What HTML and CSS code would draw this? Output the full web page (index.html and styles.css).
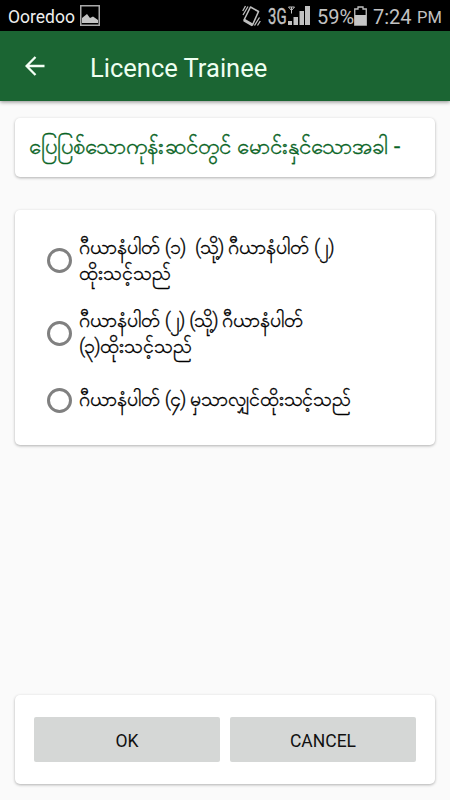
FILE: index.html
```
<!DOCTYPE html>
<html lang="my">
<head>
<meta charset="utf-8">
<title>Licence Trainee</title>
<link rel="stylesheet" href="styles.css">
</head>
<body>
<div class="status">
  <span class="carrier">Ooredoo</span>
  <svg class="picture" width="20" height="21" viewBox="0 0 20 21"><rect x=".75" y=".75" width="18.5" height="19.5" fill="none" stroke="#aaa" stroke-width="1.5"/><path d="M2 18V13L7 9L10 13L13 11.500L18 15V18Z" fill="#c4c4c4"/></svg>
  <svg class="vibrate" width="19" height="22" viewBox="0 0 19 22" fill="none" stroke="#bebebe"><path d="M8.500 2L16.500 6.500L10.500 20L2 15Z" stroke-width="1.600" stroke-linejoin="round"/><path d="M2 15L10.500 20" stroke-width="3"/><path d="M.7 6L3.500 1M1 10L6 1.500M12.500 20.500L17.500 12.500M15.500 20.500L18.300 16" stroke-width="1.300"/></svg>
  <span class="network">3G</span>
  <svg class="signal" width="22" height="20" viewBox="0 0 22 20"><path d="M0 15H4V19H0ZM5.500 11H10V19H5.500ZM11.500 5H16V19H11.500ZM17 0H22V19H17Z" fill="#c2c2c2"/><path d="M.5 1H6.500L3.500 4.500ZM3.500 1V7.500" fill="none" stroke="#c2c2c2"/></svg>
  <span class="percent">59%</span>
  <svg class="battery" width="13" height="20" viewBox="0 0 13 20"><path d="M.75 3H4V1H9V3H12.250V19H.75Z" fill="none" stroke="#bebebe" stroke-width="1.300"/><path d="M1 9H12V19H1Z" fill="#c6c6c6"/></svg>
  <span class="time">7:24</span><span class="meridiem">PM</span>
</div>
<header class="bar">
  <svg class="back" width="20" height="20" viewBox="0 0 20 20" fill="none" stroke="#f3fff5" stroke-width="2.300"><path d="M19.500 10H2M10.500 1L1.600 10L10.500 19"/></svg>
  <h1>Licence Trainee</h1>
</header>
<main>
  <section class="card question"><p>ပြေပြစ်သောကုန်းဆင်တွင် မောင်းနှင်သောအခါ -</p></section>
  <section class="card options">
    <div class="option"><i class="radio"></i><p>ဂီယာနံပါတ် <span class="group">(၁)</span>&nbsp; <span class="group">(သို့)</span> ဂီယာနံပါတ် <span class="group">(၂)</span><br>ထိုးသင့်သည်</p></div>
    <div class="option"><i class="radio"></i><p>ဂီယာနံပါတ် <span class="group">(၂)</span> <span class="group">(သို့)</span> ဂီယာနံပါတ်<br><span class="group">(၃)</span>ထိုးသင့်သည်</p></div>
    <div class="option"><i class="radio"></i><p>ဂီယာနံပါတ် <span class="group">(၄)</span> <span class="tight">မှသာလျှင်ထိုးသင့်သည်</span></p></div>
  </section>
  <section class="card actions"><button>OK</button><button>CANCEL</button></section>
</main>
</body>
</html>
```
FILE: styles.css
```
* { box-sizing: border-box; }
body {
  margin: 0;
  width: 450px;
  height: 800px;
  overflow: hidden;
  display: flex;
  flex-direction: column;
  background: #fafafa;
  color: #000;
  font-family: Roboto, "Noto Sans", sans-serif;
}
h1, p { margin: 0; font-weight: 400; }
svg { flex: none; display: block; }
.status {
  height: 31px;
  flex: none;
  background: #000;
  color: #c2c2c2;
  display: flex;
  align-items: center;
  padding: 2px 0 0 8px;
  line-height: 28px;
  white-space: nowrap;
}
.carrier { width: 72px; font-size: 17.500px; color: #eee; }
.picture { margin-top: -2px; }
.vibrate { margin: -2px 0 0 142px; }
.network { width: 21px; margin-left: 7px; font-size: 22px; transform: scaleX(.68); transform-origin: left; -webkit-text-stroke: .4px; }
.percent { width: 37px; margin-left: 7px; font-size: 20px; }
.signal, .battery { margin-top: -2px; }
.signal { margin-left: -1px; }
.time { width: 44px; margin-left: 6px; font-size: 20px; }
.meridiem { font-size: 16.500px; padding-top: 3px; }
.bar {
  height: 70px;
  flex: none;
  display: flex;
  align-items: center;
  padding-left: 25px;
  background: #1b6533;
  color: #effff1;
  box-shadow: 0 1px 4px rgba(0, 0, 0, .45);
}
.back { margin-top: -1px; }
h1 { margin-left: 45px; font-size: 25.500px; padding-top: 3px; }
main { flex: 1; display: flex; flex-direction: column; padding: 17px 15px 16px; }
.card { background: #fff; border-radius: 5px; box-shadow: 0 1px 3px rgba(0, 0, 0, .3); }
.question {
  height: 59px;
  padding: 0 14px;
  color: #096425;
  font-size: 22.200px;
  line-height: 57px;
  letter-spacing: .1px;
  white-space: nowrap;
  -webkit-text-stroke: .35px;
}
.options { height: 235px; margin-top: 33px; padding: 14px 32px; }
.option { height: 73px; display: flex; align-items: center; }
.option:last-child { height: 60px; }
.option p { margin-left: 7px; font-size: 19.500px; line-height: 26px; white-space: nowrap; font-weight: 300; -webkit-text-stroke: .35px; }
.group { letter-spacing: -1px; }
.tight { letter-spacing: -.3px; }
.radio { width: 25px; height: 25px; flex: none; border: 3px solid #808080; border-radius: 50%; }
.actions { height: 89px; margin-top: auto; display: flex; gap: 10px; padding: 22px 19px; }
button {
  flex: 1;
  height: 45px;
  padding: 2px 0 0;
  border: 0;
  border-radius: 2px;
  background: #d5d7d6;
  color: #111;
  font: 400 17.500px Roboto, sans-serif;
}
```
